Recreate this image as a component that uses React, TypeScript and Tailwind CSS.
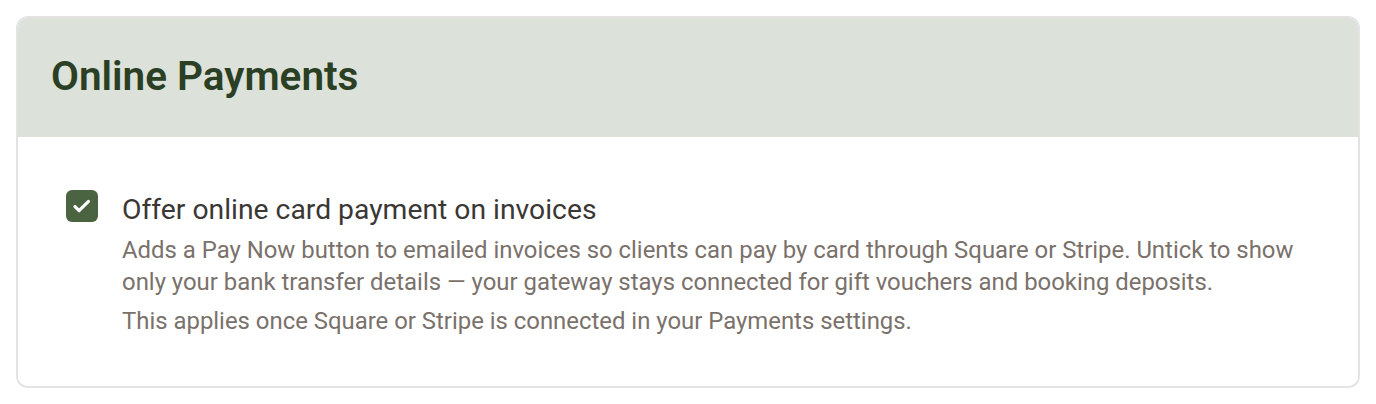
import React from "react";

export default function App() {
  return (
    <div className="w-[1376px] h-[404px] bg-white p-4" style={{ fontFamily: "Roboto, 'Noto Sans', sans-serif" }}>
      <div className="rounded-xl border-2 border-[#e3e3e3] overflow-hidden">
        <div className="bg-[#dce1da] h-[119px] flex items-center px-[33px]">
          <h2 className="text-[40.5px] font-semibold text-[#2a3f24] leading-none pb-[2px]">Online Payments</h2>
        </div>
        <div className="bg-white pt-[53px] pb-[49px] pl-[48px] pr-8 flex gap-6">
          <div className="w-8 h-8 shrink-0 rounded-[6px] bg-[#4a6340] flex items-center justify-center">
            <svg width="26" height="26" viewBox="0 0 24 24" fill="none" stroke="white" strokeWidth="3" strokeLinecap="round" strokeLinejoin="round">
              <path d="M5.5 12.5l3.8 3.8L18 7.8" />
            </svg>
          </div>
          <div className="flex flex-col">
            <div className="text-[28.3px] leading-[36px] text-[#3a3735] mt-[2px]">Offer online card payment on invoices</div>
            <p className="text-[23.9px] leading-[32px] text-[#7a716b] mt-[6px]">
              Adds a Pay Now button to emailed invoices so clients can pay by card through Square or Stripe. Untick to show only your bank transfer details — your gateway stays connected for gift vouchers and booking deposits.
            </p>
            <p className="text-[23.9px] leading-[32px] text-[#7a716b] mt-[7px]">
              This applies once Square or Stripe is connected in your Payments settings.
            </p>
          </div>
        </div>
      </div>
    </div>
  );
}
